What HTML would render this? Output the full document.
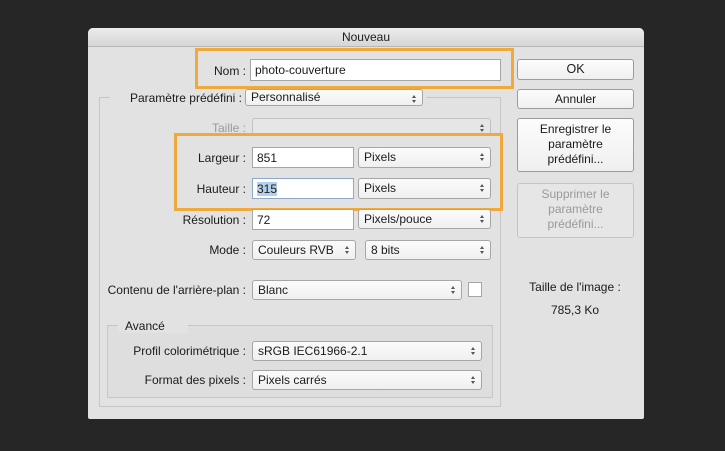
<!DOCTYPE html>
<html><head><meta charset="utf-8"><style>
*{box-sizing:border-box;margin:0;padding:0}
body{width:725px;height:451px;background:#262626;position:relative;overflow:hidden;font-family:"Liberation Sans",sans-serif;font-size:12px;color:#1a1a1a}
.a{position:absolute}
#dlg{left:88px;top:28px;width:556px;height:391px;background:#e2e2e2;border-radius:5px 5px 2px 2px}
#title{left:88px;top:28px;width:556px;height:19px;background:linear-gradient(#ececec,#d6d6d6);border-radius:5px 5px 0 0;text-align:center;line-height:19px;border-bottom:1px solid #b8b8b8}
.lbl{position:absolute;text-align:right;white-space:nowrap}
.inp{position:absolute;background:#fff;border:1px solid #a6a6a6;padding-left:4px;line-height:20px;height:21px}
.sel{position:absolute;background:linear-gradient(#fbfbfb,#f0f0f0);border:1px solid #a6a6a6;border-radius:3px;padding-left:5px;line-height:17px;height:19px}
.sel:after{content:"";position:absolute;right:6px;top:5px;width:0;height:0;border-left:2px solid transparent;border-right:2px solid transparent;border-bottom:3px solid #555}
.sel:before{content:"";position:absolute;right:6px;top:10px;width:0;height:0;border-left:2px solid transparent;border-right:2px solid transparent;border-top:3px solid #555}
.btn{position:absolute;left:517px;width:117px;background:linear-gradient(#fcfcfc,#efefef);border:1px solid #9c9c9c;border-radius:3px;text-align:center}
.or{position:absolute;border:3px solid #f2a93b}
</style></head><body>
<div id="dlg" class="a"></div>
<div id="title" class="a">Nouveau</div>

<div class="a" style="left:99px;top:97px;width:402px;height:310px;border:1px solid #c6c6c6"></div>
<div class="a" style="left:110px;top:90px;width:316px;height:16px;background:#e2e2e2"></div>
<div class="lbl" style="left:100px;width:142px;top:91px">Paramètre prédéfini :</div>
<div class="sel" style="left:245px;top:89px;width:178px;height:17px;line-height:15px">Personnalisé</div>

<div class="or" style="left:195px;top:48px;width:319px;height:41px"></div>
<div class="lbl" style="left:160px;width:86px;top:64px">Nom :</div>
<div class="inp" style="left:250px;top:59px;width:251px;height:22px">photo-couverture</div>

<div class="lbl" style="left:160px;width:86px;top:121px;color:#9a9a9a">Taille :</div>
<div class="sel" style="left:252px;top:118px;width:239px;height:17px;background:#e6e6e6;border-color:#c2c2c2"></div>

<div class="or" style="left:174px;top:133px;width:329px;height:78px"></div>
<div class="lbl" style="left:160px;width:86px;top:151px">Largeur :</div>
<div class="inp" style="left:252px;top:147px;width:102px">851</div>
<div class="sel" style="left:358px;top:147px;width:133px;height:21px;line-height:19px">Pixels</div>
<div class="lbl" style="left:160px;width:86px;top:182px">Hauteur :</div>
<div class="inp" style="left:252px;top:178px;width:102px;border-color:#8aa9cc"><span style="background:#b5d0ec">315</span></div>
<div class="sel" style="left:358px;top:178px;width:133px;height:21px;line-height:19px">Pixels</div>

<div class="lbl" style="left:140px;width:106px;top:213px">Résolution :</div>
<div class="inp" style="left:252px;top:209px;width:102px">72</div>
<div class="sel" style="left:358px;top:209px;width:133px;height:20px;line-height:18px">Pixels/pouce</div>

<div class="lbl" style="left:140px;width:106px;top:243px">Mode :</div>
<div class="sel" style="left:252px;top:240px;width:104px;height:20px;line-height:18px">Couleurs RVB</div>
<div class="sel" style="left:365px;top:240px;width:126px;height:20px;line-height:18px">8 bits</div>

<div class="lbl" style="left:100px;width:146px;top:283px">Contenu de l'arrière-plan :</div>
<div class="sel" style="left:252px;top:280px;width:210px;height:20px;line-height:18px">Blanc</div>
<div class="a" style="left:468px;top:282px;width:14px;height:15px;background:#fff;border:1px solid #a6a6a6"></div>

<div class="a" style="left:107px;top:325px;width:386px;height:73px;border:1px solid #c6c6c6;background:#dedede"></div>
<div class="a" style="left:118px;top:318px;width:70px;height:15px;background:#e2e2e2"></div>
<div class="lbl" style="left:125px;top:319px;text-align:left">Avancé</div>
<div class="lbl" style="left:110px;width:136px;top:344px">Profil colorimétrique :</div>
<div class="sel" style="left:252px;top:341px;width:230px;height:20px;line-height:18px">sRGB IEC61966-2.1</div>
<div class="lbl" style="left:110px;width:136px;top:373px">Format des pixels :</div>
<div class="sel" style="left:252px;top:370px;width:230px;height:20px;line-height:18px">Pixels carrés</div>

<div class="btn" style="top:59px;height:21px;line-height:19px;font-size:12.5px">OK</div>
<div class="btn" style="top:89px;height:20px;line-height:18px">Annuler</div>
<div class="btn" style="top:118px;height:54px;line-height:15px;padding-top:3px">Enregistrer le<br>paramètre<br>prédéfini...</div>
<div class="btn" style="top:183px;height:55px;line-height:15px;padding-top:3px;color:#9a9a9a;border-color:#c4c4c4;background:#e6e6e6">Supprimer le<br>paramètre<br>prédéfini...</div>
<div class="a" style="left:510px;width:130px;top:280px;text-align:center">Taille de l'image :</div>
<div class="a" style="left:510px;width:130px;top:303px;text-align:center">785,3 Ko</div>
</body></html>
